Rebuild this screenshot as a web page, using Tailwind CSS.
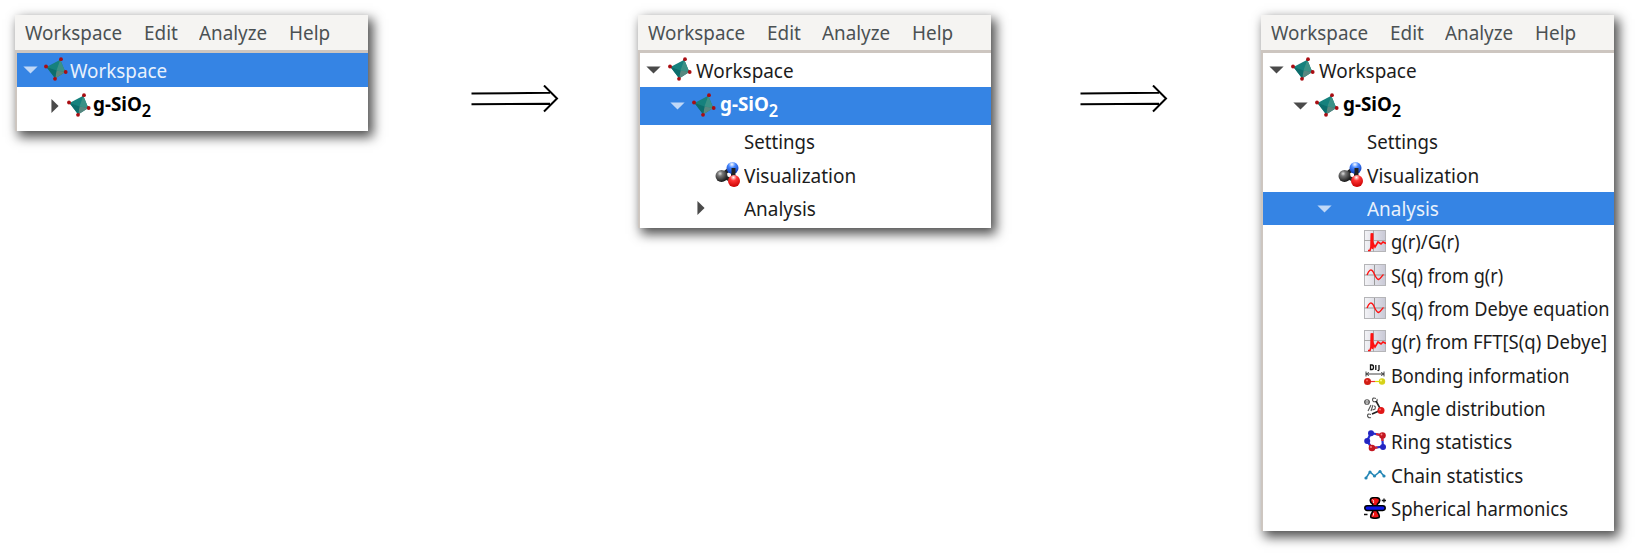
<!DOCTYPE html>
<html lang="en">
<head>
<meta charset="utf-8">
<title>Workspace tree</title>
<script src="https://cdn.jsdelivr.net/npm/@tailwindcss/browser@4"></script>
</head>
<body class="bg-white h-screen font-['Noto_Sans',sans-serif] text-[19.5px] leading-[33px] text-[#1c1c1c] overflow-hidden">
<svg class="absolute size-0">
  <defs>
    <radialGradient id="gk" cx=".38" cy=".3" r=".7"><stop offset="0" stop-color="#ddd"/><stop offset=".3" stop-color="#777"/><stop offset="1" stop-color="#181818"/></radialGradient>
    <radialGradient id="gb" cx=".45" cy=".2" r=".8"><stop offset="0" stop-color="#fff"/><stop offset=".35" stop-color="#4a8aff"/><stop offset="1" stop-color="#0735b5"/></radialGradient>
    <radialGradient id="gr" cx=".45" cy=".2" r=".8"><stop offset="0" stop-color="#fff"/><stop offset=".35" stop-color="#ff3434"/><stop offset="1" stop-color="#c80000"/></radialGradient>
    <linearGradient id="gp"><stop offset="0" stop-color="#f4f4f7"/><stop offset="1" stop-color="#c9c9d6"/></linearGradient>
    <symbol id="tetra" viewBox="0 0 24 24">
      <path d="M17 2L15.500 5M1.500 9.500L5 11M22 15L19 13M11 22L11.500 19" stroke="#a33" stroke-width="1.700"/>
      <path d="M16.300 2.800L2.500 10L11.200 21.500L21.300 15Z" fill="#16817d"/>
      <path d="M16.300 2.800L21.300 15L12.500 13.500Z" fill="#3b9186"/>
      <path d="M11.200 21.500L21.300 15L12.500 13.500Z" fill="#58877f"/>
      <path d="M2.500 10L12.500 13.500L11.200 21.500Z" fill="#0c6d6c"/>
      <g fill="#a90d12"><circle cx="17" cy="2.200" r="1.900"/><circle cx="2" cy="9.500" r="1.900"/><circle cx="21.700" cy="15" r="1.900"/><circle cx="11" cy="21.800" r="1.900"/></g>
    </symbol>
    <symbol id="vis" viewBox="0 0 25 25">
      <path d="M7 13L16 6M7 14L18 19M18 7V18" stroke="#222" stroke-width="4"/>
      <circle cx="6.500" cy="14" r="6" fill="url(#gk)"/><circle cx="17.500" cy="6" r="6" fill="url(#gb)"/><path d="M18.500 6V14" stroke="#222" stroke-width="4"/><circle cx="19" cy="19" r="6" fill="url(#gr)"/>
    </symbol>
    <symbol id="gr-plot" viewBox="0 0 22 22">
      <rect x=".5" y=".5" width="21" height="21" fill="url(#gp)" stroke="#b5b5b8"/><path d="M0 10.500H22M9.500 0V22" stroke="#aaa"/>
      <path d="M4 20.500H6L7 17L7.500 4H8.500V19L9.500 14L11 17L14 12L17 14L19 12L22 13.500" fill="none" stroke="#f11" stroke-width="1.600"/><path d="M8 3.500V18" stroke="#f11" stroke-width="2.600"/>
    </symbol>
    <symbol id="sq-plot" viewBox="0 0 22 22">
      <rect x=".5" y=".5" width="21" height="21" fill="url(#gp)" stroke="#b5b5b8"/><path d="M0 11H22M10.500 1V21" stroke="#999"/>
      <path d="M3 11C5 6 7 4.500 9 7.500C11 11 12 15 14.500 15.500C17 14.500 18 11.500 19.500 10.500" fill="none" stroke="#f11" stroke-width="1.400"/>
    </symbol>
    <symbol id="bond" viewBox="0 0 22 22">
      <path d="M6.500 1V5.500H8Q9.500 5.500 9.500 3.200Q9.500 1 8 1ZM11.800 1V6M15 1V5.500Q14.800 7 13.500 6.300" fill="none" stroke="#111" stroke-width="1.300"/>
      <path d="M2 10H20M2 7.500V12.500M20 7.500V12.500M2 10L5 8.500M2 10L5 11.500M20 10L17 8.500M20 10L17 11.500" stroke="#444" fill="none"/>
      <path d="M4 17.500H11" stroke="#e33" stroke-width="1.200"/><path d="M11 17.500H17" stroke="#dd0" stroke-width="1.200"/>
      <circle cx="3.500" cy="17.500" r="3.500" fill="#d11d13"/><circle cx="18" cy="17.500" r="3.200" fill="#d6d119"/><circle cx="3" cy="16.500" r="1" fill="#f66"/><circle cx="17" cy="16.500" r="1" fill="#ff8"/>
    </symbol>
    <symbol id="angle" viewBox="0 0 22 22">
      <g fill="none" stroke="#555" stroke-width="1.100"><circle cx="3" cy="5" r="2.300"/><path d="M0 5H6M12 1.500Q8.500 0 8.500 3Q9 5.500 12 4.500M13 2Q14 4.500 11 5M7 8L4 14M9 8L7 14M10 9Q12 9 11 12L8.500 13M7 17.500Q3.500 16 3.500 19Q4.500 21.500 7 20.500"/></g>
      <path d="M12 4L17 13L8 17" fill="none" stroke="#222" stroke-width="1.600"/><circle cx="17" cy="13.500" r="3.500" fill="#e01717"/><circle cx="16" cy="12.500" r="1" fill="#f77"/>
    </symbol>
    <symbol id="ring" viewBox="0 0 22 22">
      <path d="M7 3L18 5.500L19 16.500L8 18L3 11Z" fill="none" stroke="#2630d3" stroke-width="2.200"/><path d="M12 4L18 5.500L18.500 11M13.500 17.500L8 18L5.500 15" fill="none" stroke="#de2630" stroke-width="2.200"/>
      <g fill="#2325c2"><circle cx="7" cy="3.200" r="3"/><circle cx="3.200" cy="11" r="3"/><circle cx="19" cy="17" r="3"/></g><g fill="#c41822"><circle cx="18.500" cy="5.500" r="3.300"/><circle cx="8" cy="18" r="3.300"/></g>
      <g fill="#f88"><circle cx="17.500" cy="4.500" r=".9"/><circle cx="7" cy="17" r=".9"/></g>
    </symbol>
    <symbol id="chain" viewBox="0 0 22 22">
      <path d="M2 14L6 8L10.500 12L16 7.500L20 12" fill="none" stroke="#2386b5" stroke-width="1.500"/><g fill="#2386b5"><circle cx="2" cy="14" r="1.600"/><circle cx="6" cy="8" r="1.600"/><circle cx="10.500" cy="12" r="1.600"/><circle cx="16" cy="7.500" r="1.600"/><circle cx="20" cy="12" r="1.600"/></g>
    </symbol>
    <symbol id="sph" viewBox="0 0 22 22">
      <path d="M7 1.500Q11 -.5 15 1.500Q17 4 13.500 7L12.500 11L13.500 15Q16 18.500 15 20.500Q11 22 7 20.500Q6 18.500 8.500 15L9.500 11L8.500 7Q5 4 7 1.500Z" fill="#f01414" stroke="#000" stroke-width="1.600"/>
      <path d="M8 3Q10 2 9.500 6M8.500 19Q10 19 9.500 16" stroke="#fff" stroke-width=".8" fill="none"/>
      <rect x=".8" y="8.800" width="20.400" height="4.600" rx="2.300" fill="#0d16e8" stroke="#000" stroke-width="1.500"/>
      <path d="M17.800 3.500H22M20 1.500V5.500M0 17.500H3.500" stroke="#111" stroke-width="1.300"/>
    </symbol>
    <symbol id="down" viewBox="0 0 16 9"><path d="M0 .5H16L8 8.500Z" fill="currentColor"/></symbol>
    <symbol id="right" viewBox="0 0 9 16"><path d="M.5 0V16L8.500 8Z" fill="currentColor"/></symbol>
    <symbol id="arrow" viewBox="0 0 90 30"><path d="M1.500 8.500L80 7.800M1.500 19.200L80 18.800M74 .5L87 13.500L74 26.500" fill="none" stroke="#000" stroke-width="2"/></symbol>
  </defs>
</svg>

<main class="flex items-start pt-[15px] pl-[14.500px]">
  <section class="w-[353.500px] h-[115.500px] shrink-0 bg-white shadow-[4px_5px_11px_1px_rgba(0,0,0,0.7)]">
    <nav class="flex h-[35px] bg-[#f5f4f2] text-[#4b5153] pl-[10.500px] whitespace-nowrap leading-[36px]">
      <span class="w-[119px]"><span class="inline-block origin-left scale-x-[0.965]">Workspace</span></span><span class="w-[55px]"><span class="inline-block origin-left scale-x-[0.97]">Edit</span></span><span class="w-[90px]"><span class="inline-block origin-left scale-x-[0.965]">Analyze</span></span><span class="inline-block origin-left scale-x-[0.97]">Help</span>
    </nav>
    <div class="h-[80.500px] border-l-[2.500px] border-t-[3px] border-[#cdc6c0] whitespace-nowrap">
      <div class="flex items-center h-[33.500px] bg-[#3584e4] text-[#e8f1fc] pl-[6.500px]"><svg class="shrink-0 w-[15px] h-[8px] mt-[1px] text-[#c0d8f7]"><use href="#down"/></svg><svg class="shrink-0 w-[24px] h-[24px] ml-[6px] -mt-[1px]"><use href="#tetra"/></svg><span class="ml-[1.500px] mt-[1px] origin-left scale-x-[0.965]">Workspace</span></div>
      <div class="flex items-center h-[38.500px] pl-[34px] font-bold text-black"><svg class="shrink-0 w-[8px] h-[16px] text-[#4a4a4a]"><use href="#right"/></svg><svg class="shrink-0 w-[24px] h-[24px] ml-[8.500px] -mt-[2px]"><use href="#tetra"/></svg><span class="ml-[1.500px] -mt-[4px] origin-left scale-x-[0.965]">g-SiO<sub class="text-[17px] font-semibold leading-none -bottom-[6px]">2</sub></span></div>
    </div>
  </section>

  <svg class="w-[90px] h-[30px] shrink-0 ml-[102px] mt-[70px]"><use href="#arrow"/></svg>

  <section class="w-[353.500px] h-[213px] shrink-0 ml-[77.500px] bg-white shadow-[4px_5px_11px_1px_rgba(0,0,0,0.7)]">
    <nav class="flex h-[35px] bg-[#f5f4f2] text-[#4b5153] pl-[10.500px] whitespace-nowrap leading-[36px]">
      <span class="w-[119px]"><span class="inline-block origin-left scale-x-[0.965]">Workspace</span></span><span class="w-[55px]"><span class="inline-block origin-left scale-x-[0.97]">Edit</span></span><span class="w-[90px]"><span class="inline-block origin-left scale-x-[0.965]">Analyze</span></span><span class="inline-block origin-left scale-x-[0.97]">Help</span>
    </nav>
    <div class="h-[178px] border-l-[2.500px] border-t-[3px] border-[#cdc6c0] whitespace-nowrap">
      <div class="flex items-center h-[33.500px] pl-[6px]"><svg class="shrink-0 w-[15px] h-[8px] mt-[1px] text-[#4a4a4a]"><use href="#down"/></svg><svg class="shrink-0 w-[24px] h-[24px] ml-[7px] -mt-[1px]"><use href="#tetra"/></svg><span class="ml-[4px] mt-[1px] origin-left scale-x-[0.97]">Workspace</span></div>
      <div class="flex items-center h-[38.500px] pl-[30px] bg-[#3584e4] font-bold text-white"><svg class="shrink-0 w-[15px] h-[8px] mt-[1px] text-[#c0d8f7]"><use href="#down"/></svg><svg class="shrink-0 w-[24px] h-[24px] ml-[7px] -mt-[2px]"><use href="#tetra"/></svg><span class="ml-[4px] -mt-[4px] origin-left scale-x-[0.965]">g-SiO<sub class="text-[17px] font-semibold leading-none -bottom-[6px]">2</sub></span></div>
      <div class="flex items-center h-[33.350px] pl-[104px]"><span class="origin-left scale-x-[0.955]">Settings</span></div>
      <div class="flex items-center h-[33.350px] pl-[75px]"><svg class="shrink-0 w-[25px] h-[25px] -mt-[2px]"><use href="#vis"/></svg><span class="ml-[4px] origin-left scale-x-[0.975]">Visualization</span></div>
      <div class="flex items-center h-[33.350px] pl-[57px]"><svg class="shrink-0 w-[8px] h-[16px] text-[#4a4a4a]"><use href="#right"/></svg><span class="ml-[39px] origin-left scale-x-[0.97]">Analysis</span></div>
    </div>
  </section>

  <svg class="w-[90px] h-[30px] shrink-0 ml-[88px] mt-[70px]"><use href="#arrow"/></svg>

  <section class="w-[353px] h-[515.500px] shrink-0 ml-[91.500px] bg-white shadow-[4px_5px_11px_1px_rgba(0,0,0,0.7)]">
    <nav class="flex h-[35px] bg-[#f5f4f2] text-[#4b5153] pl-[10.500px] whitespace-nowrap leading-[36px]">
      <span class="w-[119px]"><span class="inline-block origin-left scale-x-[0.965]">Workspace</span></span><span class="w-[55px]"><span class="inline-block origin-left scale-x-[0.97]">Edit</span></span><span class="w-[90px]"><span class="inline-block origin-left scale-x-[0.965]">Analyze</span></span><span class="inline-block origin-left scale-x-[0.97]">Help</span>
    </nav>
    <div class="h-[480.500px] border-l-[2.500px] border-t-[3px] border-[#cdc6c0] whitespace-nowrap">
      <div class="flex items-center h-[33.500px] pl-[6.500px]"><svg class="shrink-0 w-[15px] h-[8px] mt-[1px] text-[#4a4a4a]"><use href="#down"/></svg><svg class="shrink-0 w-[24px] h-[24px] ml-[7px] -mt-[1px]"><use href="#tetra"/></svg><span class="ml-[4px] mt-[1px] origin-left scale-x-[0.97]">Workspace</span></div>
      <div class="flex items-center h-[38.500px] pl-[30.500px] font-bold text-black"><svg class="shrink-0 w-[15px] h-[8px] mt-[1px] text-[#4a4a4a]"><use href="#down"/></svg><svg class="shrink-0 w-[24px] h-[24px] ml-[7px] -mt-[2px]"><use href="#tetra"/></svg><span class="ml-[4px] -mt-[4px] origin-left scale-x-[0.965]">g-SiO<sub class="text-[17px] font-semibold leading-none -bottom-[6px]">2</sub></span></div>
      <div class="flex items-center h-[33.350px] pl-[104.500px]"><span class="origin-left scale-x-[0.955]">Settings</span></div>
      <div class="flex items-center h-[33.350px] pl-[75.500px]"><svg class="shrink-0 w-[25px] h-[25px] -mt-[2px]"><use href="#vis"/></svg><span class="ml-[4px] origin-left scale-x-[0.975]">Visualization</span></div>
      <div class="flex items-center h-[33.350px] pl-[54.500px] bg-[#3584e4] text-[#e8f1fc]"><svg class="shrink-0 w-[15px] h-[8px] mt-[1px] text-[#c0d8f7]"><use href="#down"/></svg><span class="ml-[35px] origin-left scale-x-[0.97]">Analysis</span></div>
      <div class="flex items-center h-[33.350px] pl-[101.500px]"><svg class="shrink-0 size-[22px] -mt-[1px]"><use href="#gr-plot"/></svg><span class="ml-[5px] origin-left scale-x-[0.94]">g(r)/G(r)</span></div>
      <div class="flex items-center h-[33.350px] pl-[101.500px]"><svg class="shrink-0 size-[22px] -mt-[1px]"><use href="#sq-plot"/></svg><span class="ml-[5px] origin-left scale-x-[0.93]">S(q) from g(r)</span></div>
      <div class="flex items-center h-[33.350px] pl-[101.500px]"><svg class="shrink-0 size-[22px] -mt-[1px]"><use href="#sq-plot"/></svg><span class="ml-[5px] origin-left scale-x-[0.935]">S(q) from Debye equation</span></div>
      <div class="flex items-center h-[33.350px] pl-[101.500px]"><svg class="shrink-0 size-[22px] -mt-[1px]"><use href="#gr-plot"/></svg><span class="ml-[5px] origin-left scale-x-[0.95]">g(r) from FFT[S(q) Debye]</span></div>
      <div class="flex items-center h-[33.350px] pl-[101.500px]"><svg class="shrink-0 size-[22px] -mt-[1px]"><use href="#bond"/></svg><span class="ml-[5px] origin-left scale-x-[0.933]">Bonding information</span></div>
      <div class="flex items-center h-[33.350px] pl-[101.500px]"><svg class="shrink-0 size-[22px] -mt-[1px]"><use href="#angle"/></svg><span class="ml-[5px] origin-left scale-x-[0.943]">Angle distribution</span></div>
      <div class="flex items-center h-[33.350px] pl-[101.500px]"><svg class="shrink-0 size-[22px] -mt-[1px]"><use href="#ring"/></svg><span class="ml-[5px] origin-left scale-x-[0.963]">Ring statistics</span></div>
      <div class="flex items-center h-[33.350px] pl-[101.500px]"><svg class="shrink-0 size-[22px] -mt-[1px]"><use href="#chain"/></svg><span class="ml-[5px] origin-left scale-x-[0.965]">Chain statistics</span></div>
      <div class="flex items-center h-[33.350px] pl-[101.500px]"><svg class="shrink-0 size-[22px] -mt-[1px]"><use href="#sph"/></svg><span class="ml-[5px] origin-left scale-x-[0.952]">Spherical harmonics</span></div>
    </div>
  </section>
</main>
</body>
</html>
